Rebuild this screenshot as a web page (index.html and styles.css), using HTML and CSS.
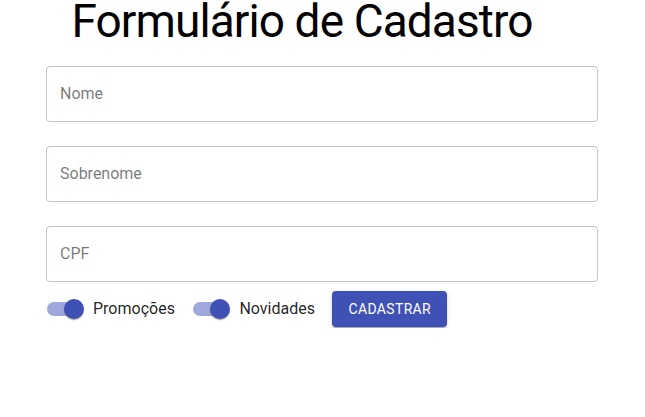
FILE: index.html
```html
<!DOCTYPE html>
<html lang="pt">
<head>
<meta charset="utf-8">
<title>Formulário de Cadastro</title>
<link rel="stylesheet" href="styles.css">
</head>
<body>
<main class="container">
  <h1 class="title">Formulário de Cadastro</h1>
  <form class="form">
    <div class="field"><label class="field-label">Nome</label></div>
    <div class="field"><label class="field-label">Sobrenome</label></div>
    <div class="field"><label class="field-label">CPF</label></div>
    <div class="actions">
      <label class="toggle">
        <span class="switch"><span class="track"></span><span class="thumb"></span></span>
        <span class="toggle-label">Promoções</span>
      </label>
      <label class="toggle">
        <span class="switch"><span class="track"></span><span class="thumb"></span></span>
        <span class="toggle-label">Novidades</span>
      </label>
      <button type="button" class="btn">Cadastrar</button>
    </div>
  </form>
</main>
</body>
</html>
```
FILE: styles.css
```css
* { box-sizing: border-box; }
html, body { margin: 0; padding: 0; background: #fff; }
body { font-family: Roboto, "Liberation Sans", sans-serif; color: rgba(0,0,0,0.87); }
.container { max-width: 600px; margin: 0 auto; padding: 0 24.5px 0 23.5px; }
.title {
  margin: 0 0 7px;
  padding-right: 40px;
  font-size: 46px;
  font-weight: 400;
  letter-spacing: -0.9px;
  line-height: 43px;
  text-align: center;
  color: #000;
}
.form { display: flex; flex-direction: column; }
.field {
  margin: 16px 0 8px;
  height: 56px;
  border: 1px solid rgba(0,0,0,0.23);
  border-radius: 4px;
  display: flex;
  align-items: center;
  padding: 0 13px;
}
.field-label { font-size: 16px; color: rgba(0,0,0,0.54); line-height: 1; }
.actions { display: flex; align-items: center; height: 38px; }
.toggle { display: flex; align-items: center; margin: 0 17.5px 0 -11px; cursor: pointer; }
.switch { position: relative; width: 58px; height: 38px; display: block; }
.track {
  position: absolute; left: 12px; top: 12px; width: 34px; height: 14px;
  border-radius: 7px; background: #3f51b5; opacity: 0.5;
}
.thumb {
  position: absolute; left: 29px; top: 9px; width: 20px; height: 20px; border-radius: 50%;
  background: #3f51b5;
  box-shadow: 0 2px 1px -1px rgba(0,0,0,0.2), 0 1px 1px 0 rgba(0,0,0,0.14), 0 1px 3px 0 rgba(0,0,0,0.12);
}
.toggle-label { font-size: 16px; line-height: 1.5; color: rgba(0,0,0,0.87); }
.btn {
  font-family: Roboto, "Liberation Sans", sans-serif;
  font-size: 14px; font-weight: 400; letter-spacing: 0.35px; line-height: 24px;
  text-transform: uppercase;
  color: #fff; background: #3f51b5; border: 0; border-radius: 4px;
  padding: 6px 16px; height: 36px;
  box-shadow: 0 3px 1px -2px rgba(0,0,0,0.2), 0 2px 2px 0 rgba(0,0,0,0.14), 0 1px 5px 0 rgba(0,0,0,0.12);
}
```
